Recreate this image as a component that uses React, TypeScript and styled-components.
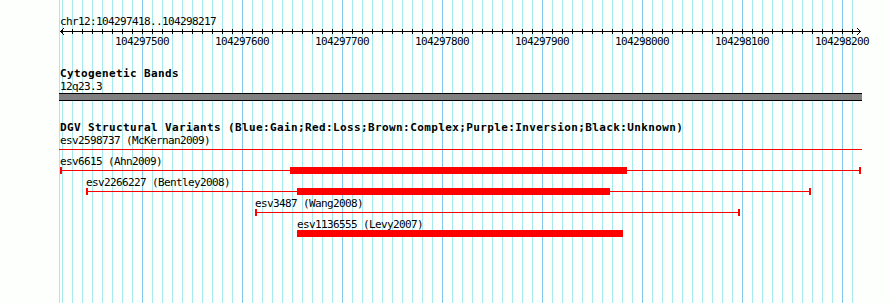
import React from "react";
import styled, { createGlobalStyle } from "styled-components";

const VIEW_START = 104297418;
const ORIGIN = 1; // x of VIEW_START inside the panel, 1px per bp
const toX = (bp: number) => ORIGIN + (bp - VIEW_START);

interface Variant {
  id: string;
  study: string;
  start?: number;
  end?: number;
  thickStart?: number;
  thickEnd?: number;
  fullSpan?: boolean;
}

const variants: Variant[] = [
  { id: "esv2598737", study: "McKernan2009", fullSpan: true },
  { id: "esv6615", study: "Ahn2009", start: 104297418, end: 104298218, thickStart: 104297648, thickEnd: 104297985 },
  { id: "esv2266227", study: "Bentley2008", start: 104297444, end: 104298168, thickStart: 104297655, thickEnd: 104297968 },
  { id: "esv3487", study: "Wang2008", start: 104297613, end: 104298097 },
  { id: "esv1136555", study: "Levy2007", thickStart: 104297655, thickEnd: 104297981 },
];

const tickLabels = [
  104297500, 104297600, 104297700, 104297800, 104297900, 104298000, 104298100, 104298200,
];

const GlobalStyle = createGlobalStyle`
  html, body {
    margin: 0;
    padding: 0;
    background: #fdfffd;
  }
`;

const Page = styled.div`
  width: 890px;
  height: 303px;
  overflow: hidden;
  background: #fdfffd;
  color: #000;
  font-family: "DejaVu Sans Mono", "Liberation Mono", monospace;
`;

const Panel = styled.div`
  margin-left: 59px;
  width: 803px;
  height: 303px;
  box-sizing: border-box;
  padding-top: 15px;
  display: flex;
  flex-direction: column;
  background-color: #fdfffd;
  background-image:
    linear-gradient(to right, #84caee 0 1px, transparent 1px 100%),
    linear-gradient(to right, #a6eaf0 0 1px, transparent 1px 100%),
    linear-gradient(to right, #a6eaf0 0 1px, transparent 1px 100%);
  background-size: 100px 100%, 10px 100%, 1px 100%;
  background-position: 83px 0, 3px 0, 0 0;
  background-repeat: repeat-x, repeat-x, no-repeat;
`;

const TextLine = styled.div<{ $gap?: number }>`
  height: 13px;
  line-height: 13px;
  margin-top: ${(p) => p.$gap ?? 0}px;
  padding-left: 1px;
  font-size: 11px;
  letter-spacing: -0.62px;
  white-space: nowrap;
`;

const TrackTitle = styled(TextLine)`
  font-weight: 700;
  letter-spacing: 0.38px;
`;

const Ruler = styled.svg`
  display: block;
  width: 803px;
  height: 7px;
`;

const TickRow = styled.div`
  position: relative;
  height: 13px;
`;

const TickLabel = styled.span`
  position: absolute;
  top: 0;
  width: 60px;
  text-align: center;
  font-size: 11px;
  line-height: 13px;
  letter-spacing: -0.62px;
  white-space: nowrap;
`;

const BandBar = styled.div`
  height: 6px;
  border-top: 1px solid #000;
  border-bottom: 1px solid #000;
  background: #808080;
`;

const VariantList = styled.div`
  margin-top: 2px;
  display: flex;
  flex-direction: column;
`;

const VariantRow = styled.div`
  height: 21px;
`;

const VariantLabel = styled.div`
  height: 10px;
  line-height: 10px;
  font-size: 11px;
  letter-spacing: -0.62px;
  white-space: nowrap;
`;

const Glyph = styled.div`
  position: relative;
  height: 7px;
`;

const Line = styled.div`
  position: absolute;
  top: 3px;
  height: 1px;
  background: #ff0000;
`;

const Bar = styled.div`
  position: absolute;
  top: 0;
  height: 7px;
  background: #ff0000;
`;

const Cap = styled.div`
  position: absolute;
  top: 0;
  width: 2px;
  height: 7px;
  background: #ff0000;
`;

const RulerAxis: React.FC = () => {
  const ticks = Array.from({ length: 80 }, (_, i) => 3.5 + i * 10);
  return (
    <Ruler viewBox="0 0 803 7">
      <line x1={1} y1={3.5} x2={802} y2={3.5} stroke="#000" strokeWidth={1} />
      {ticks.map((x) => (
        <line key={x} x1={x} y1={1} x2={x} y2={6} stroke="#000" strokeWidth={1} />
      ))}
      <polyline points="5,0 1.5,3.5 5,7" fill="none" stroke="#000" strokeWidth={1} />
      <polyline points="798,0 801.5,3.5 798,7" fill="none" stroke="#000" strokeWidth={1} />
    </Ruler>
  );
};

const VariantTrack: React.FC<{ v: Variant }> = ({ v }) => {
  const labelX = v.fullSpan ? 1 : toX(v.start ?? v.thickStart ?? VIEW_START);
  return (
    <VariantRow>
      <VariantLabel style={{ paddingLeft: labelX }}>
        {v.id} ({v.study})
      </VariantLabel>
      <Glyph>
        {v.fullSpan && <Line style={{ left: 0, width: 803 }} />}
        {v.start !== undefined && v.end !== undefined && (
          <>
            <Line style={{ left: toX(v.start), width: toX(v.end) - toX(v.start) + 1 }} />
            <Cap style={{ left: toX(v.start) }} />
            <Cap style={{ left: toX(v.end) - 1 }} />
          </>
        )}
        {v.thickStart !== undefined && v.thickEnd !== undefined && (
          <Bar style={{ left: toX(v.thickStart), width: toX(v.thickEnd) - toX(v.thickStart) }} />
        )}
      </Glyph>
    </VariantRow>
  );
};

const App: React.FC = () => {
  return (
    <>
      <GlobalStyle />
      <Page>
        <Panel>
          <TextLine>chr12:104297418..104298217</TextLine>
          <RulerAxis />
          <TickRow>
            {tickLabels.map((bp) => (
              <TickLabel key={bp} style={{ left: toX(bp) - 30 }}>
                {bp}
              </TickLabel>
            ))}
          </TickRow>

          <TrackTitle $gap={19}>Cytogenetic Bands</TrackTitle>
          <TextLine>12q23.3</TextLine>
          <BandBar />

          <TrackTitle $gap={20}>
            DGV Structural Variants (Blue:Gain;Red:Loss;Brown:Complex;Purple:Inversion;Black:Unknown)
          </TrackTitle>
          <VariantList>
            {variants.map((v) => (
              <VariantTrack key={v.id} v={v} />
            ))}
          </VariantList>
        </Panel>
      </Page>
    </>
  );
};

export default App;
